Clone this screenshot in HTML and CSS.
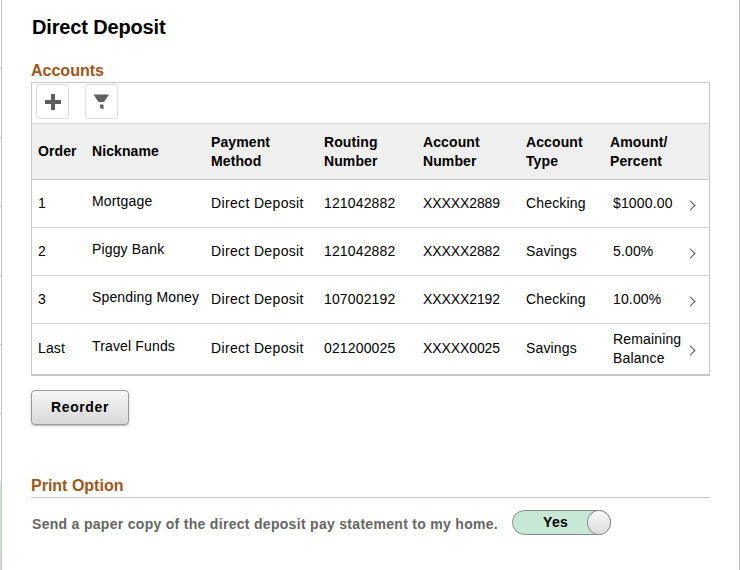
FILE: index.html
```html
<!DOCTYPE html>
<html lang="en">
<head>
  <meta charset="UTF-8">
  <meta name="viewport" content="width=device-width, initial-scale=1.0">
  <title>Direct Deposit</title>
  <link rel="stylesheet" href="styles.css">
</head>
<body>
  <div class="page">
    <h1>Direct Deposit</h1>

    <!-- Accounts -->
    <h2 class="section-title">Accounts</h2>
    <div class="grid">
      <div class="toolbar">
        <button class="tool-btn" type="button" aria-label="Add">
          <svg width="18" height="18" viewBox="0 0 18 18"><path d="M7 1h4v6h6v4h-6v6H7v-6H1V7h6z" fill="#5f5f5f"/></svg>
        </button>
        <button class="tool-btn" type="button" aria-label="Filter">
          <svg width="18" height="18" viewBox="0 0 18 18"><path d="M.5 1.5H16l-5 7.5H5.5z M6.8 11.5h3.7v5.2L9 15.5H7.4z" fill="#5f5f5f"/></svg>
        </button>
      </div>
      <table>
        <thead>
          <tr>
            <th class="col-order">Order</th>
            <th class="col-name">Nickname</th>
            <th class="col-method">Payment<br>Method</th>
            <th class="col-routing">Routing<br>Number</th>
            <th class="col-account">Account<br>Number</th>
            <th class="col-type">Account<br>Type</th>
            <th class="col-amount">Amount/<br>Percent</th>
          </tr>
        </thead>
        <tbody>
          <tr>
            <td>1</td>
            <td class="nick">Mortgage</td>
            <td class="method">Direct Deposit</td>
            <td>121042882</td>
            <td class="acct">XXXXX2889</td>
            <td>Checking</td>
            <td><div class="amount"><span>$1000.00</span><span class="chevron"></span></div></td>
          </tr>
          <tr>
            <td>2</td>
            <td class="nick">Piggy Bank</td>
            <td class="method">Direct Deposit</td>
            <td>121042882</td>
            <td class="acct">XXXXX2882</td>
            <td>Savings</td>
            <td><div class="amount"><span>5.00%</span><span class="chevron"></span></div></td>
          </tr>
          <tr>
            <td>3</td>
            <td class="nick">Spending Money</td>
            <td class="method">Direct Deposit</td>
            <td>107002192</td>
            <td class="acct">XXXXX2192</td>
            <td>Checking</td>
            <td><div class="amount"><span>10.00%</span><span class="chevron"></span></div></td>
          </tr>
          <tr class="last-row">
            <td>Last</td>
            <td class="nick">Travel Funds</td>
            <td class="method">Direct Deposit</td>
            <td>021200025</td>
            <td class="acct">XXXXX0025</td>
            <td>Savings</td>
            <td><div class="amount"><span>Remaining<br>Balance</span><span class="chevron"></span></div></td>
          </tr>
        </tbody>
      </table>
    </div>
    <button class="reorder-btn" type="button">Reorder</button>

    <!-- Print option -->
    <h2 class="section-title print-title">Print Option</h2>
    <div class="print-row">
      <span class="print-label">Send a paper copy of the direct deposit pay statement to my home.</span>
      <div class="toggle">
        <span class="toggle-text">Yes</span>
        <span class="toggle-knob"></span>
      </div>
    </div>
  </div>
</body>
</html>
```

FILE: styles.css
```css
* {
  box-sizing: border-box;
}

html, body {
  margin: 0;
  padding: 0;
  height: 100%;
}

body {
  font-family: "Liberation Sans", Arial, sans-serif;
  font-size: 14px;
  color: #000;
  /* 1px sliver of the tile column behind the page */
  background:
    linear-gradient(#c8e8d6, #c8e8d6) 0 484px / 1px 69px no-repeat,
    linear-gradient(#d8d8d8, #d8d8d8) 0 553px / 1px 17px no-repeat,
    repeating-linear-gradient(#fff 0, #fff 68px, #c4c4c4 68px, #c4c4c4 69px) 0 0 / 1px 570px no-repeat,
    #fff;
  overflow: hidden;
}

.page {
  height: 570px;
  margin: 0 0 0 1px;
  width: 739px;
  padding: 15px 29px 0 29px;
  border-left: 1px solid #c4c4c4;
  border-right: 1px solid #c4c4c4;
  background: #fff;
}

h1 {
  margin: 0;
  padding-left: 1px;
  font-size: 20px;
  line-height: 24px;
  font-weight: bold;
  letter-spacing: -0.15px;
}

.section-title {
  margin: 0;
  font-size: 16px;
  line-height: 20px;
  font-weight: bold;
  color: #a0561a;
}

h1 + .section-title {
  margin-top: 22px;
  margin-bottom: 1px;
}

.grid {
  width: 679px;
  border: 1px solid #c8c8c8;
  border-bottom: 2px solid #c8c8c8;
}

.toolbar {
  display: flex;
  gap: 16px;
  height: 40px;
  padding: 1px 0 0 4px;
}

.tool-btn {
  width: 33px;
  height: 35px;
  padding: 0;
  display: flex;
  align-items: center;
  justify-content: center;
  background: #fff;
  border: 1px solid #dcdcdc;
  border-radius: 3px;
}

table {
  width: 100%;
  border-collapse: collapse;
  table-layout: fixed;
}

th {
  height: 56px;
  padding: 0 0 0 6px;
  text-align: left;
  vertical-align: middle;
  font-size: 14px;
  line-height: 19px;
  letter-spacing: 0.1px;
  background: #efefef;
  border-top: 1px solid #d4d4d4;
  border-bottom: 1px solid #c8c8c8;
}

td {
  height: 48px;
  padding: 0 0 0 6px;
  vertical-align: middle;
  font-size: 14px;
  line-height: 19px;
  letter-spacing: 0.15px;
  border-bottom: 1px solid #d4d4d4;
}

.last-row td {
  height: 50px;
  border-bottom: 0;
}

.nick {
  padding-bottom: 4px;
}

.method {
  letter-spacing: 0.35px;
}

.acct {
  letter-spacing: -0.1px;
}

.col-order { width: 54px; }
.col-name { width: 119px; }
.col-method { width: 113px; }
.col-routing { width: 99px; }
.col-account { width: 103px; }
.col-type { width: 84px; }

.amount {
  display: flex;
  align-items: center;
  justify-content: space-between;
  padding: 0 15px 0 3px;
}

.chevron {
  width: 7px;
  height: 7px;
  margin-top: 3px;
  border-top: 1px solid #555;
  border-right: 1px solid #555;
  transform: rotate(45deg);
}

.reorder-btn {
  display: block;
  width: 98px;
  height: 35px;
  margin-top: 14px;
  padding: 0;
  font-family: inherit;
  font-size: 14px;
  font-weight: bold;
  letter-spacing: 0.6px;
  color: #000;
  background: linear-gradient(#f6f6f6, #d8d8d8);
  border: 1px solid #9a9a9a;
  border-radius: 4px;
  box-shadow: 0 1px 2px rgba(0, 0, 0, 0.3);
}

.print-title {
  margin-top: 50px;
  padding-bottom: 1px;
  line-height: 21px;
  border-bottom: 1px solid #c8c8c8;
}

.print-row {
  display: flex;
  align-items: center;
  gap: 14px;
  margin-top: 12px;
  padding-left: 1px;
}

.print-label {
  padding-top: 4px;
  font-weight: bold;
  color: #666;
  letter-spacing: 0.3px;
}

.toggle {
  position: relative;
  width: 99px;
  height: 25px;
  background: #c8e8d6;
  border: 1px solid #8a8a8a;
  border-radius: 13px;
}

.toggle-text {
  display: block;
  padding-left: 30px;
  font-weight: bold;
  line-height: 22px;
  letter-spacing: 0.3px;
}

.toggle-knob {
  position: absolute;
  top: -1px;
  right: -1px;
  width: 24px;
  height: 25px;
  background: linear-gradient(#f8f8f8, #dcdcdc);
  border: 1px solid #8a8a8a;
  border-radius: 50%;
}
```
